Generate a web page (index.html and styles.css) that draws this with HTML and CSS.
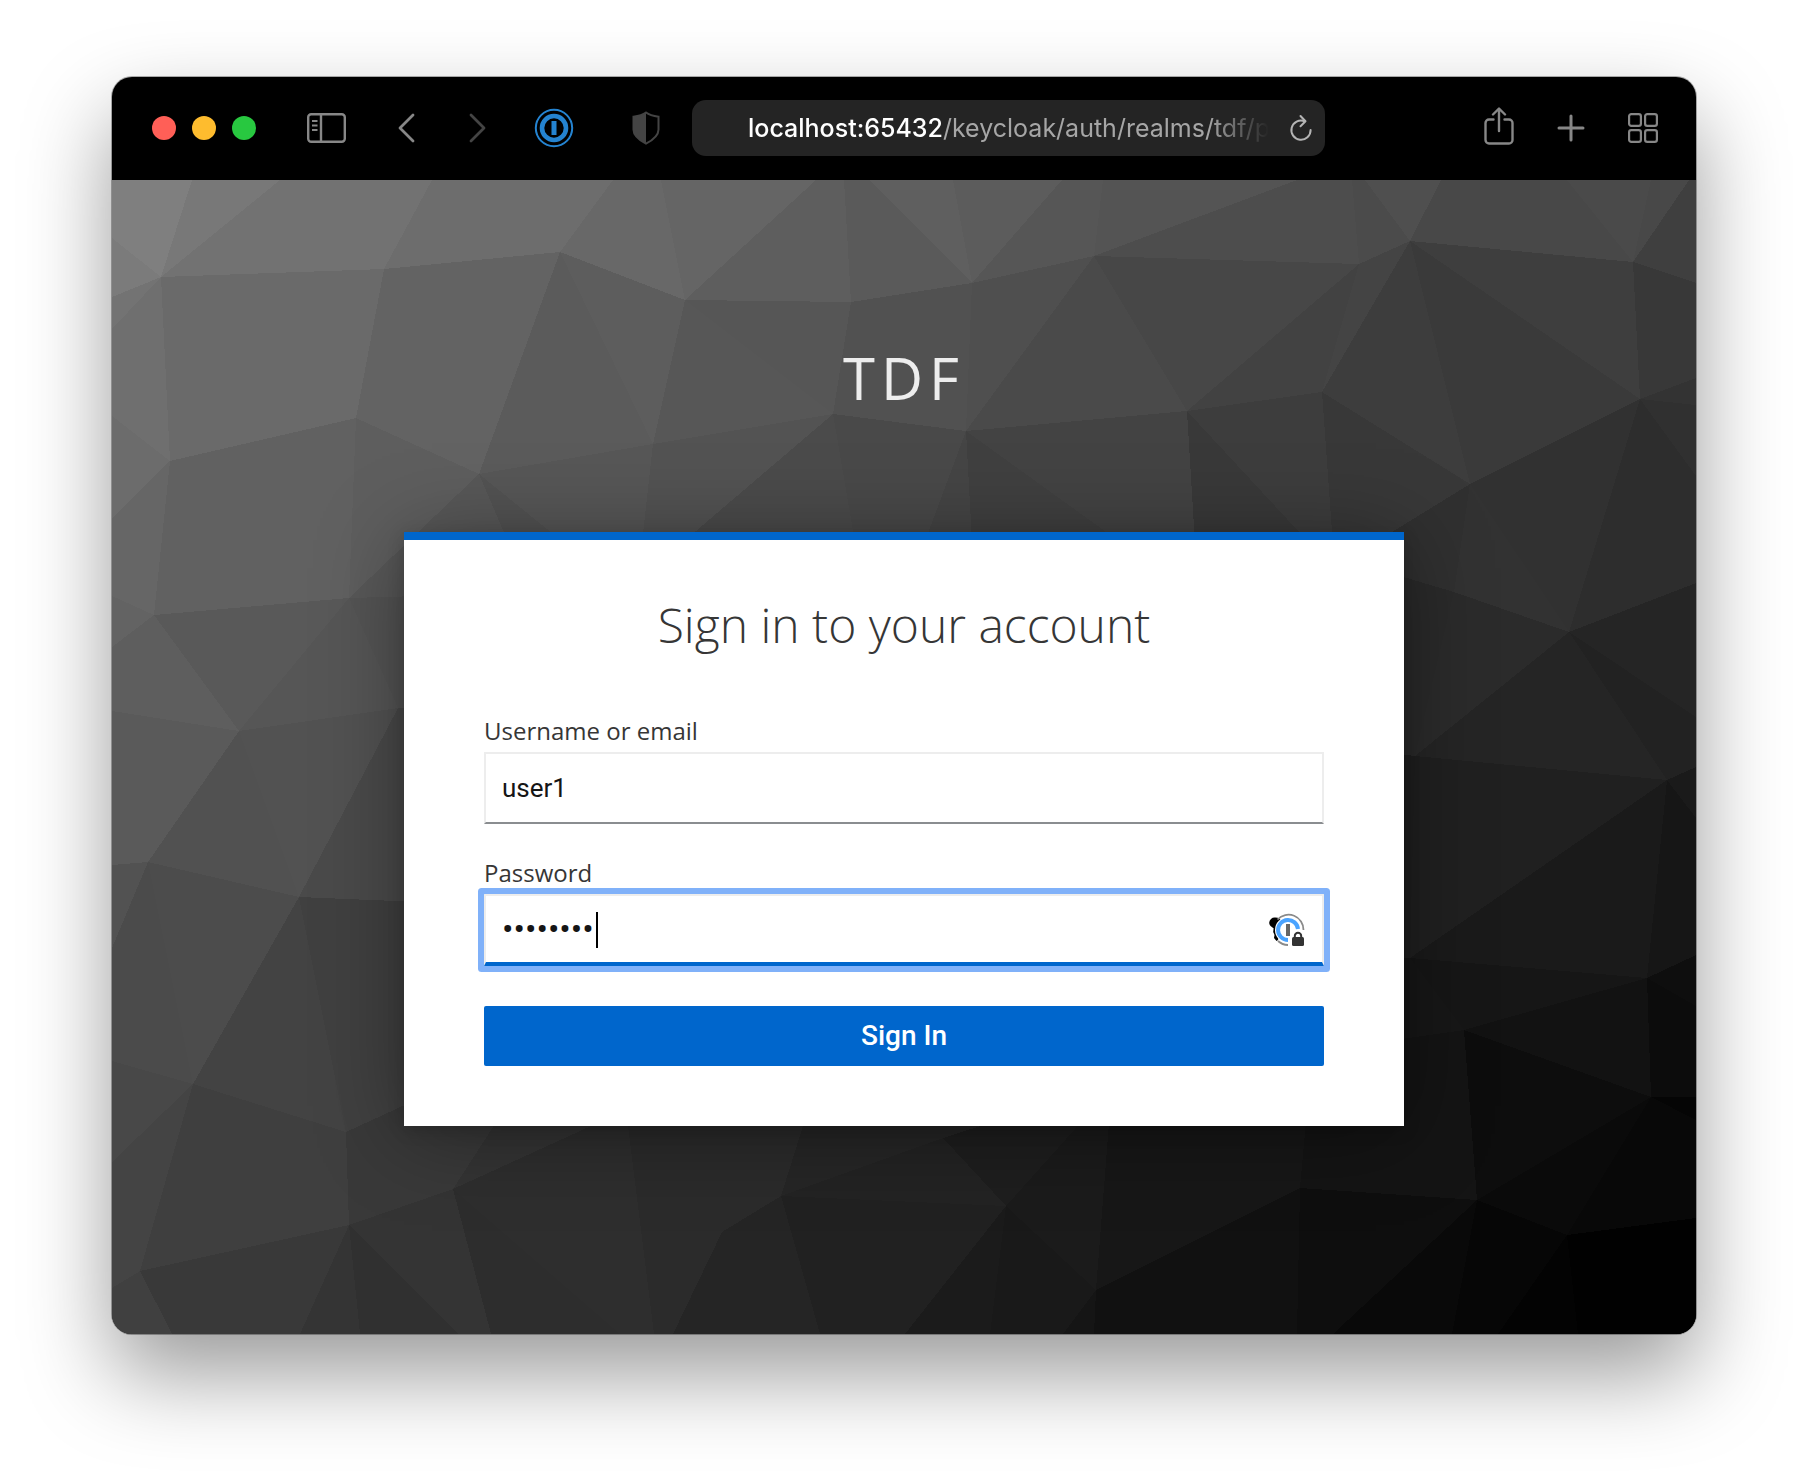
FILE: index.html
```html
<!DOCTYPE html>
<html lang="en">
<head>
<meta charset="utf-8">
<meta name="viewport" content="width=device-width, initial-scale=1">
<title>Sign in to TDF</title>
<link rel="stylesheet" href="styles.css">
</head>
<body>
<div class="window">
  <header class="toolbar">
    <div class="lights">
      <span class="light light-close"></span>
      <span class="light light-minimise"></span>
      <span class="light light-zoom"></span>
    </div>
    <button class="tool tool-sidebar" type="button" aria-label="Show sidebar">
      <svg width="39" height="30" viewBox="0 0 39 30" fill="none" stroke="currentColor" stroke-width="2.4"><rect x="1.2" y="1.2" width="36.6" height="27.6" rx="3"/><path d="M14 1v28"/><path d="M5 8h5.500M5 12.500h5.500M5 17h5.500" stroke-width="1.800"/></svg>
    </button>
    <div class="history">
      <button class="tool" type="button" aria-label="Back">
        <svg width="17" height="30" viewBox="0 0 17 30" fill="none" stroke="currentColor" stroke-width="2.800" stroke-linecap="round" stroke-linejoin="round"><path d="M15 2 2 15l13 13"/></svg>
      </button>
      <button class="tool tool-dim" type="button" aria-label="Forward">
        <svg width="17" height="30" viewBox="0 0 17 30" fill="none" stroke="currentColor" stroke-width="2.800" stroke-linecap="round" stroke-linejoin="round"><path d="M2 2l13 13L2 28"/></svg>
      </button>
    </div>
    <button class="tool tool-vault" type="button" aria-label="Password manager">
      <svg width="40" height="40" viewBox="0 0 40 40" fill="none" stroke="#2483d0"><circle cx="20" cy="20" r="18.200" stroke-width="2"/><circle cx="20" cy="20" r="12" stroke-width="4.600"/><path d="M20 13v14" stroke-width="5"/></svg>
    </button>
    <button class="tool tool-dim" type="button" aria-label="Privacy report">
      <svg width="28" height="34" viewBox="0 0 28 34"><path d="M14 1.500c3 2.300 7 3.500 12.500 4.200v13c0 6.500-6 10.500-12.500 14-6.500-3.500-12.500-7.500-12.500-14v-13C7 5 11 3.800 14 1.500z" fill="none" stroke="currentColor" stroke-width="2"/><path d="M14 1.500v31.200c-6.500-3.500-12.500-7.500-12.500-14v-13C7 5 11 3.800 14 1.500z" fill="currentColor"/></svg>
    </button>
    <div class="address">
      <a class="url" href="#"><span class="host">localhost:65432</span>/keycloak/auth/realms/tdf/p</a>
      <button class="tool tool-reload" type="button" aria-label="Reload">
        <svg width="24" height="28" viewBox="0 0 24 28" fill="none" stroke="currentColor" stroke-width="2" stroke-linecap="round" stroke-linejoin="round"><path d="M15.500 7.200A9.600 9.600 0 1 0 21.600 16"/><path d="M11.500 2l5 5.300-5 5"/></svg>
      </button>
    </div>
    <div class="actions">
      <button class="tool tool-share" type="button" aria-label="Share">
        <svg width="30" height="38" viewBox="0 0 30 38" fill="none" stroke="currentColor" stroke-width="2.400" stroke-linecap="round" stroke-linejoin="round"><path d="M9.500 12.500H5a3.500 3.500 0 0 0-3.500 3.500v17A3.500 3.500 0 0 0 5 36.500h20a3.500 3.500 0 0 0 3.500-3.500V16a3.500 3.500 0 0 0-3.500-3.500h-4.500M15 24V2M9 7.500 15 1.500l6 6"/></svg>
      </button>
      <button class="tool" type="button" aria-label="New tab">
        <svg width="28" height="28" viewBox="0 0 28 28" fill="none" stroke="currentColor" stroke-width="3" stroke-linecap="round"><path d="M14 2v24M2 14h24"/></svg>
      </button>
      <button class="tool" type="button" aria-label="Tab overview">
        <svg width="30" height="30" viewBox="0 0 30 30" fill="none" stroke="currentColor" stroke-width="2.200"><rect x="1.100" y="1.100" width="11.800" height="11.800" rx="2.200"/><rect x="17.100" y="1.100" width="11.800" height="11.800" rx="2.200"/><rect x="1.100" y="17.100" width="11.800" height="11.800" rx="2.200"/><rect x="17.100" y="17.100" width="11.800" height="11.800" rx="2.200"/></svg>
      </button>
    </div>
  </header>

  <main class="page">
    <svg class="facets" viewBox="112 180 1584 1154" preserveAspectRatio="xMidYMid slice" aria-hidden="true">
      <path fill="#7f7f7f" d="M112 180L192 180 161 277 112 238z"/>
      <path fill="#7b7b7b" d="M112 238L161 277 112 297z"/>
      <path fill="#787878" d="M192 180L280 180 161 277z"/>
      <path fill="#727272" d="M280 180L432 180 384 269 161 277z"/>
      <path fill="#6d6d6d" d="M432 180L613 180 560 252 384 269z"/>
      <path fill="#686868" d="M613 180L661 180 685 300 560 252z"/>
      <path fill="#656565" d="M661 180L816 180 685 300z"/>
      <path fill="#5e5e5e" d="M816 180L844 180 851 302 685 300z"/>
      <path fill="#5a5a5a" d="M844 180L869 180 972 283 851 302z"/>
      <path fill="#5f5f5f" d="M869 180L953 180 972 283z"/>
      <path fill="#5c5c5c" d="M953 180L1062 180 972 283z"/>
      <path fill="#565656" d="M1062 180L1103 180 1094 256 972 283z"/>
      <path fill="#545454" d="M1103 180L1297 180 1094 256z"/>
      <path fill="#4d4d4d" d="M1297 180L1352 180 1359 264 1094 256z"/>
      <path fill="#4b4b4b" d="M1352 180L1365 180 1410 241 1359 264z"/>
      <path fill="#4f4f4f" d="M1365 180L1441 180 1410 241z"/>
      <path fill="#484848" d="M1441 180L1567 180 1633 262 1410 241z"/>
      <path fill="#4a4a4a" d="M1567 180L1651 180 1633 262z"/>
      <path fill="#484848" d="M1651 180L1689 180 1633 262z"/>
      <path fill="#3f3f3f" d="M1689 180L1696 180 1696 283 1633 262z"/>
      <path fill="#737373" d="M112 297L161 277 112 329z"/>
      <path fill="#6f6f6f" d="M112 329L161 277 170 461 112 416z"/>
      <path fill="#6a6a6a" d="M161 277L384 269 356 418 170 461z"/>
      <path fill="#636363" d="M384 269L560 252 479 474 356 418z"/>
      <path fill="#5b5b5b" d="M560 252L653 444 479 474z"/>
      <path fill="#5d5d5d" d="M560 252L685 300 653 444z"/>
      <path fill="#575757" d="M685 300L833 414 653 444z"/>
      <path fill="#565656" d="M685 300L851 302 833 414z"/>
      <path fill="#515151" d="M851 302L972 283 966 431 833 414z"/>
      <path fill="#4f4f4f" d="M972 283L1094 256 966 431z"/>
      <path fill="#4a4a4a" d="M1094 256L1187 411 966 431z"/>
      <path fill="#474747" d="M1094 256L1359 264 1187 411z"/>
      <path fill="#424242" d="M1359 264L1322 392 1187 411z"/>
      <path fill="#444444" d="M1359 264L1410 241 1322 392z"/>
      <path fill="#3d3d3d" d="M1410 241L1470 484 1322 392z"/>
      <path fill="#3a3a3a" d="M1410 241L1640 399 1470 484z"/>
      <path fill="#3e3e3e" d="M1410 241L1633 262 1640 399z"/>
      <path fill="#383838" d="M1633 262L1696 283 1696 378 1640 399z"/>
      <path fill="#6c6c6c" d="M112 416L170 461 112 518z"/>
      <path fill="#666666" d="M112 518L170 461 154 615 112 596z"/>
      <path fill="#616161" d="M170 461L356 418 349 598 154 615z"/>
      <path fill="#5e5e5e" d="M356 418L479 474 349 598z"/>
      <path fill="#585858" d="M349 598L479 474 520 570 420 596z"/>
      <path fill="#535353" d="M479 474L600 572 520 570z"/>
      <path fill="#575757" d="M479 474L653 444 640 560 600 572z"/>
      <path fill="#535353" d="M653 444L833 414 662 560 640 560z"/>
      <path fill="#4b4b4b" d="M833 414L858 560 662 560z"/>
      <path fill="#494949" d="M833 414L966 431 918 560 858 560z"/>
      <path fill="#454545" d="M966 431L973 560 918 560z"/>
      <path fill="#404040" d="M966 431L1145 560 973 560z"/>
      <path fill="#434343" d="M966 431L1187 411 1196 560 1145 560z"/>
      <path fill="#393939" d="M1187 411L1325 560 1196 560z"/>
      <path fill="#3d3d3d" d="M1187 411L1322 392 1334 560 1325 560z"/>
      <path fill="#383838" d="M1322 392L1470 484 1350 570 1334 560z"/>
      <path fill="#303030" d="M1470 484L1454 592 1380 570 1340 564z"/>
      <path fill="#323232" d="M1470 484L1569 632 1454 592z"/>
      <path fill="#313131" d="M1470 484L1640 399 1569 632z"/>
      <path fill="#2d2d2d" d="M1640 399L1696 476 1696 583 1569 632z"/>
      <path fill="#303030" d="M1640 399L1696 405 1696 476z"/>
      <path fill="#333333" d="M1640 399L1696 378 1696 405z"/>
      <path fill="#2a2a2a" d="M1454 592L1380 570 1380 752 1415 756z"/>
      <path fill="#2b2b2b" d="M1454 592L1569 632 1415 756z"/>
      <path fill="#252525" d="M1569 632L1667 780 1415 756z"/>
      <path fill="#222222" d="M1569 632L1696 717 1696 767 1667 780z"/>
      <path fill="#252525" d="M1569 632L1696 583 1696 717z"/>
      <path fill="#202020" d="M1415 756L1667 780 1410 958z"/>
      <path fill="#1f1f1f" d="M1380 752L1415 756 1410 958 1380 960z"/>
      <path fill="#1a1a1a" d="M1667 780L1647 978 1410 958z"/>
      <path fill="#161616" d="M1667 780L1696 818 1696 955 1647 978z"/>
      <path fill="#1a1a1a" d="M1667 780L1696 767 1696 818z"/>
      <path fill="#161616" d="M1410 958L1647 978 1464 1030z"/>
      <path fill="#171717" d="M1380 960L1410 958 1464 1030 1380 1042z"/>
      <path fill="#121212" d="M1647 978L1651 1097 1464 1030z"/>
      <path fill="#0e0e0e" d="M1647 978L1696 955 1696 1006z"/>
      <path fill="#0c0c0c" d="M1647 978L1696 1006 1696 1097 1651 1097z"/>
      <path fill="#0d0d0d" d="M1464 1030L1651 1097 1477 1200z"/>
      <path fill="#0a0a0a" d="M1651 1097L1567 1235 1477 1200z"/>
      <path fill="#080808" d="M1651 1097L1696 1120 1696 1218 1567 1235z"/>
      <path fill="#050505" d="M1651 1097L1696 1097 1696 1120z"/>
      <path fill="#010101" d="M1567 1235L1696 1218 1696 1334 1578 1334z"/>
      <path fill="#030303" d="M1567 1235L1578 1334 1498 1334z"/>
      <path fill="#060606" d="M1477 1200L1567 1235 1498 1334 1452 1334z"/>
      <path fill="#090909" d="M1477 1200L1452 1334 1333 1334z"/>
      <path fill="#0e0e0e" d="M1300 1188L1477 1200 1333 1334 1297 1334z"/>
      <path fill="#141414" d="M1464 1030L1477 1200 1300 1188 1308 1100 1380 1042z"/>
      <path fill="#171717" d="M1110 1110L1308 1100 1300 1188 1096 1290z"/>
      <path fill="#111111" d="M1300 1188L1297 1334 1094 1334 1096 1290z"/>
      <path fill="#1b1b1b" d="M1006 1206L1092 1110 1110 1110 1096 1290z"/>
      <path fill="#191919" d="M1006 1206L1096 1290 1063 1334 990 1334z"/>
      <path fill="#151515" d="M1096 1290L1094 1334 1063 1334z"/>
      <path fill="#1b1b1b" d="M1006 1206L990 1334 905 1334z"/>
      <path fill="#212121" d="M781 1196L1006 1206 905 1334 820 1334z"/>
      <path fill="#232323" d="M781 1196L943 1138 1006 1206z"/>
      <path fill="#1e1e1e" d="M943 1138L1030 1110 1092 1110 1006 1206z"/>
      <path fill="#262626" d="M781 1196L808 1110 1030 1110 943 1138z"/>
      <path fill="#252525" d="M722 1232L781 1196 820 1334 673 1334z"/>
      <path fill="#2b2b2b" d="M626 1110L808 1110 781 1196 722 1232 673 1334 654 1334z"/>
      <path fill="#2e2e2e" d="M453 1189L626 1110 654 1334 620 1334z"/>
      <path fill="#2d2d2d" d="M453 1189L620 1334 491 1334z"/>
      <path fill="#343434" d="M349 1225L453 1189 491 1334 458 1334z"/>
      <path fill="#303030" d="M349 1225L458 1334 360 1334z"/>
      <path fill="#343434" d="M349 1225L360 1334 300 1334z"/>
      <path fill="#393939" d="M140 1271L349 1225 300 1334 172 1334z"/>
      <path fill="#404040" d="M112 1288L140 1271 172 1334 112 1334z"/>
      <path fill="#444444" d="M112 1162L193 1084 140 1271 112 1288z"/>
      <path fill="#3f3f3f" d="M193 1084L346 1132 349 1225 140 1271z"/>
      <path fill="#393939" d="M346 1132L420 1096 504 1110 453 1189 349 1225z"/>
      <path fill="#343434" d="M504 1110L626 1110 453 1189z"/>
      <path fill="#484848" d="M112 1061L193 1084 112 1162z"/>
      <path fill="#4b4b4b" d="M112 948L148 862 193 1084 112 1061z"/>
      <path fill="#4c4c4c" d="M148 862L299 897 193 1084z"/>
      <path fill="#434343" d="M299 897L346 1132 193 1084z"/>
      <path fill="#404040" d="M299 897L420 902 420 1098 346 1132z"/>
      <path fill="#525252" d="M112 865L148 862 112 948z"/>
      <path fill="#5a5a5a" d="M112 711L239 731 148 862 112 865z"/>
      <path fill="#515151" d="M239 731L299 897 148 862z"/>
      <path fill="#525252" d="M239 731L398 708 299 897z"/>
      <path fill="#4a4a4a" d="M398 708L420 706 420 902 299 897z"/>
      <path fill="#5e5e5e" d="M154 615L239 731 112 711 112 647z"/>
      <path fill="#636363" d="M112 596L154 615 112 647z"/>
      <path fill="#595959" d="M154 615L349 598 239 731z"/>
      <path fill="#565656" d="M349 598L398 708 239 731z"/>
      <path fill="#545454" d="M349 598L420 596 420 706 398 708z"/>
    </svg>
    <h1 class="realm">TDF</h1>
    <section class="card">
      <h2 class="card-title">Sign in to your account</h2>
      <form class="form">
        <label class="label" for="username">Username or email</label>
        <input class="input" id="username" type="text" value="user1">
        <label class="label label-next" for="password">Password</label>
        <div class="secret">
          <input class="input input-active" id="password" type="password" value="password">
          <span class="caret"></span>
          <svg class="key" width="36" height="34" viewBox="0 0 36 34" aria-hidden="true">
            <path d="M6 4.500a7 7 0 0 1 7 5.500L9 27 7.500 28 5 25 5.500 22 4.200 19 4.600 15.200C2 14 .2 12 .2 9.800A5.500 5.500 0 0 1 6 4.500z" fill="#000"/>
            <circle cx="19" cy="17" r="13" fill="#fff"/>
            <path d="M8.500 6.500A15 15 0 0 1 34.500 17M19 32A15 15 0 0 1 9 28" fill="none" stroke="#8a8a8a" stroke-width="1.800"/>
            <path d="M29 16A10 10 0 1 0 19 27" fill="none" stroke="#4aa3ff" stroke-width="4"/>
            <path d="M19 11v12" stroke="#666" stroke-width="4"/>
            <rect x="23" y="24" width="12" height="9" rx="1.500" fill="#333"/>
            <path d="M25.800 25v-2a3.200 3.200 0 0 1 6.400 0v2" fill="none" stroke="#333" stroke-width="2"/>
          </svg>
        </div>
        <button class="submit" type="submit">Sign In</button>
      </form>
    </section>
  </main>
</div>
</body>
</html>
```
FILE: styles.css
```css
* {
  box-sizing: border-box;
}

body {
  display: flex;
  min-height: 100vh;
  margin: 0;
  padding: 77px 112px 148px;
  background: #fff;
  font-family: "Open Sans", "Noto Sans", sans-serif;
}

.window {
  display: flex;
  flex: 1;
  flex-direction: column;
  min-width: 0;
  overflow: hidden;
  border-radius: 20px;
  background: #000;
  box-shadow: 0 0 0 1px rgba(0, 0, 0, 0.3), 0 40px 88px rgba(0, 0, 0, 0.4);
}

/* Browser toolbar */
.toolbar {
  display: flex;
  align-items: center;
  height: 103px;
  padding: 0 38px 2px 40px;
}

.lights {
  display: flex;
  gap: 16px;
}

.light {
  width: 24px;
  height: 24px;
  border-radius: 50%;
}

.light-close {
  background: #ff5f57;
}

.light-minimise {
  background: #febc2e;
}

.light-zoom {
  background: #28c840;
}

.tool {
  display: flex;
  padding: 0;
  border: 0;
  background: none;
  color: #878787;
}

.tool-dim {
  color: #444;
}

.tool-sidebar {
  margin-left: 51px;
}

.tool-share {
  padding-bottom: 4px;
}

.history {
  display: flex;
  gap: 54px;
  margin-left: 52px;
}

.tool-vault {
  margin: 0 58px 0 48px;
}

.address {
  display: flex;
  flex: 1;
  align-items: center;
  min-width: 0;
  height: 56px;
  margin-left: 32px;
  padding: 0 12px 0 56px;
  border-radius: 14px;
  background: #242424;
}

.url {
  flex: 1;
  overflow: hidden;
  color: #a6a6a6;
  font: 25px/36px Inter, sans-serif;
  text-decoration: none;
  white-space: nowrap;
  -webkit-mask-image: linear-gradient(to left, transparent 12px, #000 72px);
  mask-image: linear-gradient(to left, transparent 12px, #000 72px);
}

.host {
  color: #fff;
  font-weight: 500;
}

.tool-reload {
  margin-left: 8px;
  color: #b4b4b4;
}

.actions {
  display: flex;
  align-items: center;
  gap: 43px;
  margin-left: 159px;
}

/* Login page */
.page {
  position: relative;
  display: flex;
  flex: 1;
  flex-direction: column;
  align-items: center;
  padding: 158px 40px 60px;
  background: linear-gradient(135deg, #777, #404040 50%, #050505);
}

.facets {
  position: absolute;
  inset: 0;
  width: 100%;
  height: 100%;
}

.facets path {
  shape-rendering: crispEdges;
}

.realm {
  position: relative;
  margin: 0 0 114px;
  color: #ededed;
  font-size: 58px;
  font-weight: 400;
  line-height: 80px;
  letter-spacing: 6px;
}

.card {
  position: relative;
  width: 100%;
  max-width: 1000px;
  padding: 53px 80px 60px;
  border-top: 8px solid #06c;
  background: #fff;
  box-shadow: 0 8px 80px rgba(0, 0, 0, 0.36), 0 4px 16px rgba(0, 0, 0, 0.16);
}

.card-title {
  margin: 0 0 56px;
  color: #363636;
  font-size: 48px;
  font-weight: 300;
  line-height: 64px;
  text-align: center;
}

.form {
  display: flex;
  flex-direction: column;
}

.label {
  padding-bottom: 3px;
  color: #363636;
  font-size: 24px;
  line-height: 36px;
}

.label-next {
  margin-top: 31px;
}

.input {
  width: 100%;
  height: 72px;
  padding: 0 16px;
  border: 2px solid #ededed;
  border-bottom-color: #8a8d90;
  border-radius: 0;
  outline: none;
  background: #fff;
  color: #151515;
  font: 26px/36px Roboto, sans-serif;
}

.input-active {
  border-bottom: 4px solid #06c;
  border-radius: 1px;
  box-shadow: 0 0 0 6px #80b1f9;
  font-size: 34px;
}

.secret {
  position: relative;
  display: flex;
}

.caret {
  position: absolute;
  top: 18px;
  left: 112px;
  width: 2px;
  height: 36px;
  background: #000;
}

.key {
  position: absolute;
  top: 19px;
  right: 19px;
}

.submit {
  height: 60px;
  margin-top: 40px;
  padding: 0;
  border: 0;
  border-radius: 2px;
  background: #06c;
  color: #fff;
  font: 500 28px/36px Roboto, sans-serif;
}
```
